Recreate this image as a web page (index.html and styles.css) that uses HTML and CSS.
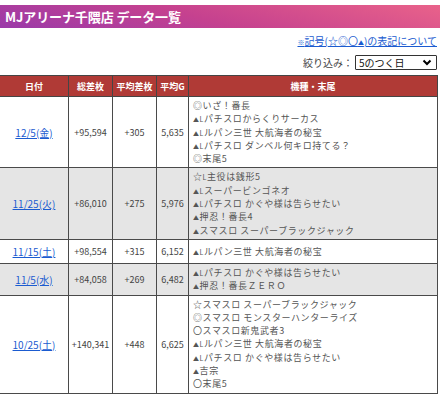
FILE: index.html
```html
<!DOCTYPE html>
<html lang="ja">
<head>
<meta charset="utf-8">
<link rel="stylesheet" href="styles.css">
</head>
<body>
<header class="title-bar"><h1 class="title">MJアリーナ千隈店 データ一覧</h1></header>
<div class="tools">
  <a class="note-link" href="#"><span class="small">※</span>記号(☆◎〇<span class="tri">▲</span>)の表記について</a>
  <div class="filter">
    <span class="filter-label">絞り込み：</span>
    <select class="filter-select"><option>5のつく日</option></select>
  </div>
</div>
<table class="data">
  <colgroup><col class="c1"><col class="c2"><col class="c3"><col class="c4"><col class="c5"></colgroup>
  <thead>
    <tr><th>日付</th><th>総差枚</th><th>平均差枚</th><th>平均G</th><th>機種・末尾</th></tr>
  </thead>
  <tbody>
    <tr>
      <td class="date"><a href="#">12/5(金)</a></td><td class="num">+95,594</td><td class="num">+305</td><td class="num">5,635</td>
      <td class="models">◎いざ！番長<br><span class="tri">▲</span><span class="l">L</span>パチスロからくりサーカス<br><span class="tri">▲</span><span class="l">L</span>ルパン三世 大航海者の秘宝<br><span class="tri">▲</span><span class="l">L</span>パチスロ ダンベル何キロ持てる？<br>◎末尾5</td>
    </tr>
    <tr class="alt">
      <td class="date"><a href="#">11/25(火)</a></td><td class="num">+86,010</td><td class="num">+275</td><td class="num">5,976</td>
      <td class="models">☆<span class="l">L</span>主役は銭形5<br><span class="tri">▲</span><span class="l">L</span>スーパービンゴネオ<br><span class="tri">▲</span><span class="l">L</span>パチスロ かぐや様は告らせたい<br><span class="tri">▲</span>押忍！番長4<br><span class="tri">▲</span>スマスロ スーパーブラックジャック</td>
    </tr>
    <tr>
      <td class="date"><a href="#">11/15(土)</a></td><td class="num">+98,554</td><td class="num">+315</td><td class="num">6,152</td>
      <td class="models"><span class="tri">▲</span><span class="l">L</span>ルパン三世 大航海者の秘宝</td>
    </tr>
    <tr class="alt">
      <td class="date"><a href="#">11/5(水)</a></td><td class="num">+84,058</td><td class="num">+269</td><td class="num">6,482</td>
      <td class="models"><span class="tri">▲</span><span class="l">L</span>パチスロ かぐや様は告らせたい<br><span class="tri">▲</span>押忍！番長ＺＥＲＯ</td>
    </tr>
    <tr>
      <td class="date"><a href="#">10/25(土)</a></td><td class="num">+140,341</td><td class="num">+448</td><td class="num">6,625</td>
      <td class="models">☆スマスロ スーパーブラックジャック<br>◎スマスロ モンスターハンターライズ<br>〇スマスロ新鬼武者3<br><span class="tri">▲</span><span class="l">L</span>ルパン三世 大航海者の秘宝<br><span class="tri">▲</span><span class="l">L</span>パチスロ かぐや様は告らせたい<br><span class="tri">▲</span>吉宗<br>〇末尾5</td>
    </tr>
    <tr class="alt">
      <td class="date"><a href="#">10/15(水)</a></td><td class="num">+72,118</td><td class="num">+231</td><td class="num">6,044</td>
      <td class="models"><span class="tri">▲</span><span class="l">L</span>ルパン三世 大航海者の秘宝</td>
    </tr>
  </tbody>
</table>
</body>
</html>
```
FILE: styles.css
```css
html, body {
  margin: 0;
  padding: 0;
  background: #fff;
}
body {
  font-family: "Noto Sans CJK JP", "Noto Sans", sans-serif;
  color: #333;
  overflow: hidden;
}
.title-bar {
  margin-top: 5px;
  height: 23px;
  background: linear-gradient(15deg, #9a3aa9 0%, #c5418f 45%, #e9628a 100%);
  display: flex;
  align-items: center;
  padding-left: 5px;
}
.title {
  margin: 0;
  font-size: 13px;
  font-weight: bold;
  color: #fff;
  line-height: 1;
  letter-spacing: -0.1px;
}
.tools {
  display: flex;
  flex-direction: column;
  align-items: flex-end;
  padding-right: 3px;
  padding-top: 6px;
}
.note-link {
  font-size: 10px;
  line-height: 14px;
  color: #1b5bd0;
  text-decoration: underline;
}
.small {
  font-size: 7px;
  line-height: 0;
}
.tri {
  font-size: 6px;
  line-height: 0;
}
.l {
  font-size: 7px;
  line-height: 0;
}
.filter {
  display: flex;
  align-items: center;
  margin-top: 7px;
  gap: 2px;
}
.filter-label {
  font-size: 10px;
  color: #444;
}
.filter-select {
  appearance: none;
  -webkit-appearance: none;
  width: 82px;
  height: 15px;
  box-sizing: border-box;
  border: 1px solid #333;
  border-radius: 1px;
  padding: 0 0 0 3px;
  font-family: "Noto Sans CJK JP", sans-serif;
  font-size: 10px;
  line-height: 13px;
  color: #111;
  background: #fff url("data:image/svg+xml;utf8,<svg xmlns='http://www.w3.org/2000/svg' width='10' height='7' viewBox='0 0 10 7'><path d='M1.5 1.5 L5 5 L8.5 1.5' fill='none' stroke='black' stroke-width='2'/></svg>") no-repeat right 4px center;
}
.data {
  margin-top: 5px;
  margin-left: -1px;
  width: 439px;
  border-collapse: collapse;
  table-layout: fixed;
}
.c1 { width: 69px; }
.c2 { width: 44px; }
.c3 { width: 44px; }
.c4 { width: 32px; }
.c5 { width: auto; }
.data th {
  background: #b03a36;
  color: #fff;
  font-size: 9px;
  font-weight: bold;
  height: 20px;
  padding: 0;
  border: 1px solid #454545;
  text-align: center;
}
.data td {
  border: 1px solid #4a4a4a;
  padding: 2px 0;
  vertical-align: middle;
}
.data tr.alt td {
  background: #e5e5e5;
}
.date {
  text-align: center;
  font-size: 10px;
  line-height: 19px;
}
.date a {
  color: #1b5bd0;
  text-decoration: underline;
}
.num {
  text-align: center;
  font-size: 9px;
  line-height: 19px;
  color: #444;
}
.models {
  font-size: 9px;
  line-height: 13.3px;
  letter-spacing: 0.6px;
  color: #555;
  padding-left: 4px !important;
  white-space: nowrap;
  overflow: hidden;
}
```
